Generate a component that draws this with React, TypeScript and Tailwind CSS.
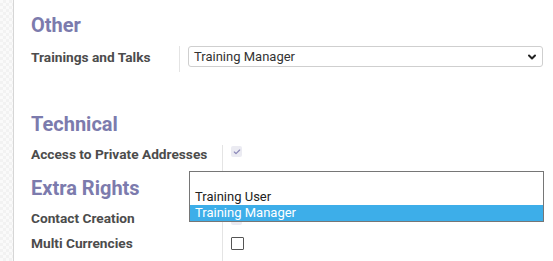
import { ChevronDown, Check } from "lucide-react";

const font = { fontFamily: "Roboto, 'Liberation Sans', sans-serif" };

function Heading({ children }: { children: string }) {
  return <h2 className="text-[20px] leading-[24px] font-bold text-[#7c7bad]">{children}</h2>;
}

export default function App() {
  return (
    <div className="relative flex h-[261px] w-[553px] overflow-hidden bg-white" style={font}>
      <div className="w-[14px] shrink-0 border-r border-[#d6d6d6] bg-[repeating-conic-gradient(#f2f2f2_0%_25%,#fafafa_0%_50%)] bg-[length:6px_6px]" />
      <div className="flex-1 pl-[17px] pt-[13px]">
        <Heading>Other</Heading>
        <div className="mt-[9px] flex">
          <div className="h-[26px] w-[149px] border-r border-[#e4e4e4] pt-[3px] text-[13.7px] font-bold leading-[16px] text-[#4c4c4c]">
            Trainings and Talks
          </div>
          <div className="pl-[8px]">
            <div className="flex h-[21px] w-[355px] items-center justify-between rounded-[3px] border border-[#cfcfcf] pl-[5px] pr-[4px] text-[13px] text-[#333]">
              <span>Training Manager</span>
              <ChevronDown size={12} strokeWidth={4} className="text-[#222]" />
            </div>
          </div>
        </div>
        <div className="mt-[40px]">
          <Heading>Technical</Heading>
        </div>
        <div className="mt-[9px] flex">
          <div className="h-[26px] w-[192px] border-r border-[#e4e4e4] pt-[1px] text-[13.7px] font-bold leading-[16px] text-[#4c4c4c]">
            Access to Private Addresses
          </div>
          <div className="pl-[8px] pt-[1px]">
            <div className="flex h-[11px] w-[11px] items-center justify-center rounded-[2px] bg-[#ebebf2]">
              <Check size={8} strokeWidth={3.5} className="text-[#8a87b8]" />
            </div>
          </div>
        </div>
        <div className="mt-[5px]">
          <Heading>Extra Rights</Heading>
        </div>
        <div className="flex">
          <div className="w-[192px] border-r border-[#e4e4e4] text-[13.7px] font-bold leading-[16px] text-[#4c4c4c]">
            <div className="pt-[10px]">Contact Creation</div>
            <div className="mt-[9px]">Multi Currencies</div>
            <div className="h-[12px]" />
          </div>
          <div className="pl-[8px] pt-[14px]">
            <div className="h-[11px] w-[11px] rounded-[2px] bg-[#ebebf2]" />
            <div className="mt-[12px] h-[13px] w-[13px] rounded-[1px] border-[1.5px] border-[#555] bg-white" />
          </div>
        </div>
      </div>
      <div className="absolute left-[189px] top-[171px] w-[355px] border border-[#767676] bg-white text-[13px] leading-[16px]">
        <div className="h-[16px]" />
        <div className="h-[17px] pl-[5px] pt-[1px] text-[#222]">Training User</div>
        <div className="h-[16px] bg-[#3daee9] pl-[5px] text-white">Training Manager</div>
      </div>
    </div>
  );
}
